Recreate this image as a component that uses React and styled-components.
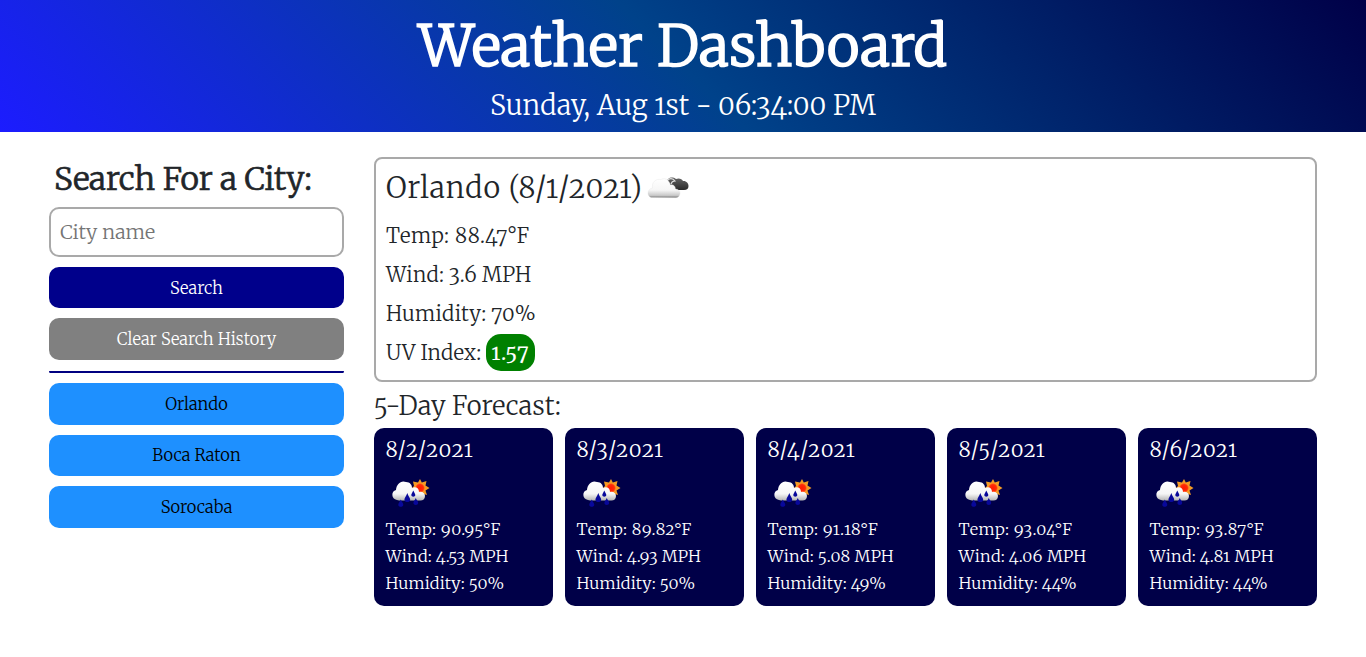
import React from "react";
import styled, { createGlobalStyle } from "styled-components";

const GlobalStyle = createGlobalStyle`
  *, *::before, *::after { box-sizing: border-box; }
  body {
    margin: 0;
    background: #fff;
    color: #212529;
    font-family: Merriweather, "DejaVu Serif Condensed", "DejaVu Serif", serif;
    font-size: 16.5px;
    font-weight: 300;
    font-variant-numeric: oldstyle-nums;
  }
  h1, h2, h3, p { margin: 0; font-weight: 300; }
`;

const Header = styled.header`
  height: 132px;
  padding-top: 11px;
  color: #fff;
  text-align: center;
  background: linear-gradient(45deg, #1c1cff, #00428a, #000048);
`;

const Title = styled.h1`
  font-size: 56px;
  line-height: 70px;
  letter-spacing: 0.5px;
  -webkit-text-stroke: 1.7px #fff;
`;

const Clock = styled.p`
  font-size: 27.2px;
  line-height: 48px;
  letter-spacing: 0.07px;
`;

const Page = styled.main`
  display: flex;
  gap: 30px;
  padding: 25px 49px 0;
`;

const Sidebar = styled.aside`
  width: 295px;
  flex: none;
  display: flex;
  flex-direction: column;
`;

const SearchTitle = styled.h2`
  padding-left: 5px;
  font-size: 31.8px;
  line-height: 45px;
  margin-bottom: 5px;
  -webkit-text-stroke: 0.7px #212529;
`;

const CityInput = styled.input`
  width: 100%;
  height: 49.8px;
  padding: 1px 8px 0 9px;
  border: 2px solid darkgray;
  border-radius: 10px;
  font: inherit;
  font-size: 19.8px;
  outline: none;
  &::placeholder { color: #757575; opacity: 1; }
`;

const Button = styled.button`
  height: 41.6px;
  margin-top: 10px;
  padding: 1px 0 0;
  border: 0;
  border-radius: 10px;
  font: inherit;
  letter-spacing: 0.05px;
  color: ${(p) => p.$color || "#fff"};
  background: ${(p) => p.$bg};
`;

const Divider = styled.div`
  height: 3px;
  margin-top: 10px;
  border-bottom: 2px solid navy;
  border-radius: 10px;
`;

const Content = styled.section`
  flex: 1;
  min-width: 0;
`;

const Current = styled.section`
  height: 225px;
  padding: 7px 10px;
  border: 2px solid darkgray;
  border-radius: 8px;
`;

const CityTitle = styled.h2`
  display: flex;
  align-items: center;
  height: 50px;
  padding-bottom: 6px;
  font-size: 28.8px;
  letter-spacing: 0.85px;
`;

const Stat = styled.p`
  display: flex;
  align-items: center;
  height: 39px;
  font-size: 20.5px;
  letter-spacing: ${(p) => p.$spacing || 0}px;
`;

const UvBadge = styled.span`
  display: flex;
  align-items: center;
  justify-content: center;
  width: 49px;
  height: 37px;
  margin-left: 4.5px;
  border-radius: 15px;
  color: #fff;
  background: green;
  font-weight: 400;
  letter-spacing: 1.1px;
`;

const ForecastTitle = styled.h2`
  height: 46px;
  font-size: 25.6px;
  line-height: 48px;
  letter-spacing: 0.17px;
`;

const Cards = styled.div`
  display: grid;
  grid-template-columns: repeat(5, 1fr);
  gap: 12px;
`;

const Card = styled.article`
  height: 178px;
  padding: 6px 11.5px;
  border-radius: 10px;
  color: #fff;
  background: #000048;
  font-size: 16.3px;
`;

const CardDate = styled.h3`
  font-size: 20.8px;
  font-weight: 350;
  line-height: 32px;
  letter-spacing: 1px;
`;

const CardRow = styled.p`
  font-weight: 350;
  line-height: 27px;
  white-space: nowrap;
  letter-spacing: ${(p) => p.$spacing}px;
`;

const CloudSvg = styled.svg`
  margin-left: 4px;
  flex: none;
`;

const RainSvg = styled.svg`
  display: block;
  margin: 10px 0 6px 5.5px;
`;

function CloudIcon() {
  return (
    <CloudSvg width="44" height="24" viewBox="0 0 44 24">
      <defs>
        <linearGradient id="cloudLight" x1="0" y1="0" x2="0" y2="1">
          <stop offset="0" stopColor="#fff" />
          <stop offset="0.6" stopColor="#f6f6f6" />
          <stop offset="0.88" stopColor="#c9c9c9" />
          <stop offset="1" stopColor="#777" />
        </linearGradient>
        <linearGradient id="cloudDark" x1="0" y1="0" x2="0" y2="1">
          <stop offset="0" stopColor="#666" />
          <stop offset="1" stopColor="#292929" />
        </linearGradient>
      </defs>
      <path d="M20 6 C20 2 25 0 29 3 C32 1.500 35 3 36 5 C39 4.500 41.500 7 41.500 10 C41.500 12.500 40 14 37 14 L27 14 Z" fill="url(#cloudDark)" />
      <path d="M20 5 C22 1.500 26 2 28 5 C26 5 24.500 6 24 8" fill="none" stroke="#ddd" strokeWidth="1.200" />
      <path d="M4 21.500 C-0.500 20 0 13 5.500 12 C4.500 6 9 2.500 14 3.500 C17 1.500 22 3 23.500 9 C26 8 28.500 10 28.500 13 C32 13 34 16 32.500 19 C32 21 30.500 21.700 29 21.700 Z" fill="url(#cloudLight)" stroke="#ddd" strokeWidth="0.3" />
    </CloudSvg>
  );
}

function RainIcon() {
  return (
    <RainSvg width="44" height="34" viewBox="0 0 44 34">
      <defs>
        <linearGradient id="rainCloud" x1="0" y1="0" x2="0" y2="1">
          <stop offset="0" stopColor="#fff" />
          <stop offset="0.65" stopColor="#f6f6f6" />
          <stop offset="1" stopColor="#b5b5b5" />
        </linearGradient>
        <radialGradient id="sun">
          <stop offset="0" stopColor="#ff1a00" />
          <stop offset="0.65" stopColor="#ff2a08" />
          <stop offset="1" stopColor="#ffa32b" />
        </radialGradient>
      </defs>
      <path d="M29 3 L30.800 6.500 L35.500 5 L34.500 9.500 L38.500 12 L34.500 14.500 L36 19 L31 17.500 L27 19 L24 17 L21 12 L23 10 L22 5.500 L27 6.500 Z" fill="#f29a24" />
      <circle cx="29" cy="12" r="5.200" fill="url(#sun)" />
      <path d="M6 24 C0 23 0 15 5 14 C5.500 8 10 4 15 6 C19 6 21 9 21 12 C25 10 28 12.500 28 16 C31 15 34 17 34 20 C34 23 32 24.500 29.500 24.500 L8 24.500 Z" fill="url(#rainCloud)" />
      <g fill="#08089a">
        <path d="M16.300 17 C17 20 19.200 21.500 19.200 23.700 C19.200 26.800 13.400 26.800 13.400 23.700 C13.400 21.500 15.500 20 16.300 17 Z" />
        <path d="M22.300 14.500 C23 16.500 24.300 17.500 24.300 19 C24.300 21.200 20.300 21.200 20.300 19 C20.300 17.500 21.600 16.500 22.300 14.500 Z" />
        <path d="M9.800 23.500 C10.500 25.500 12.300 27 12.300 28.700 C12.300 31.500 7.300 31.500 7.300 28.700 C7.300 27 9 25.500 9.800 23.500 Z" />
        <path d="M24.800 22 C25.500 24 27.200 25.300 27.200 27 C27.200 29.600 22.400 29.600 22.400 27 C22.400 25.300 24 24 24.800 22 Z" />
      </g>
    </RainSvg>
  );
}

const history = ["Orlando", "Boca Raton", "Sorocaba"];

const forecast = [
  { date: "8/2/2021", temp: "90.95", wind: "4.53", humidity: 50 },
  { date: "8/3/2021", temp: "89.82", wind: "4.93", humidity: 50 },
  { date: "8/4/2021", temp: "91.18", wind: "5.08", humidity: 49 },
  { date: "8/5/2021", temp: "93.04", wind: "4.06", humidity: 44 },
  { date: "8/6/2021", temp: "93.87", wind: "4.81", humidity: 44 },
];

export default function App() {
  return (
    <>
      <GlobalStyle />
      <Header>
        <Title>Weather Dashboard</Title>
        <Clock>Sunday, Aug 1st - 06:34:00 PM</Clock>
      </Header>
      <Page>
        <Sidebar>
          <SearchTitle>Search For a City:</SearchTitle>
          <CityInput placeholder="City name" />
          <Button $bg="#00008b">Search</Button>
          <Button $bg="gray">Clear Search History</Button>
          <Divider />
          {history.map((city) => (
            <Button key={city} $bg="dodgerblue" $color="#000">
              {city}
            </Button>
          ))}
        </Sidebar>
        <Content>
          <Current>
            <CityTitle>
              Orlando (8/1/2021)
              <CloudIcon />
            </CityTitle>
            <Stat $spacing={0.6}>Temp: 88.47°F</Stat>
            <Stat $spacing={0.25}>Wind: 3.6 MPH</Stat>
            <Stat $spacing={0.3}>Humidity: 70%</Stat>
            <Stat $spacing={0.1}>
              UV Index:
              <UvBadge>1.57</UvBadge>
            </Stat>
          </Current>
          <ForecastTitle>5-Day Forecast:</ForecastTitle>
          <Cards>
            {forecast.map((d) => (
              <Card key={d.date}>
                <CardDate>{d.date}</CardDate>
                <RainIcon />
                <CardRow $spacing={0.55}>Temp: {d.temp}°F</CardRow>
                <CardRow $spacing={0.25}>Wind: {d.wind} MPH</CardRow>
                <CardRow $spacing={0.2}>Humidity: {d.humidity}%</CardRow>
              </Card>
            ))}
          </Cards>
        </Content>
      </Page>
    </>
  );
}
